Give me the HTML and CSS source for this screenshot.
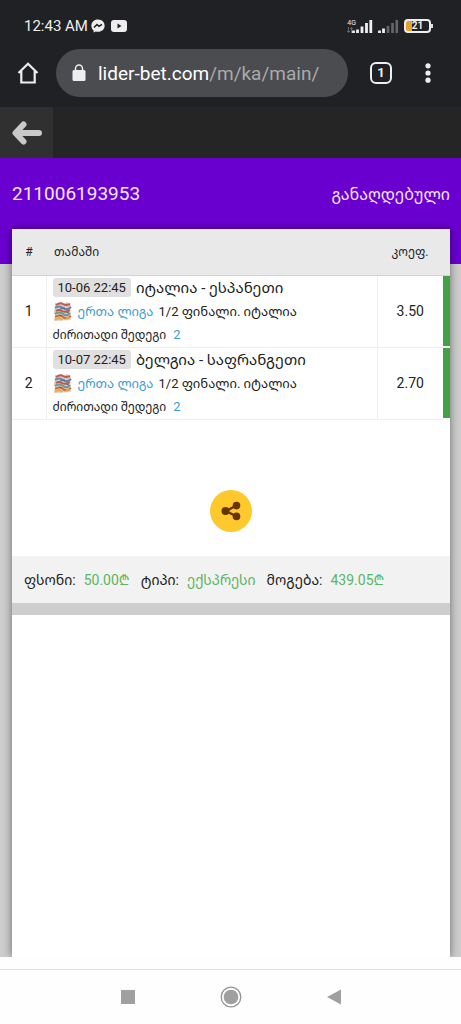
FILE: index.html
```html
<!DOCTYPE html>
<html lang="ka">
<head>
<meta charset="utf-8">
<meta name="viewport" content="width=device-width, initial-scale=1">
<title>lider-bet.com</title>
<link rel="stylesheet" href="styles.css">
</head>
<body>
<svg class="defs" aria-hidden="true">
  <symbol id="crest" viewBox="0 0 20 20">
    <path d="M2 2l3 1 3-2 3 2 3-2 3 2 1 3-1 3 1 4-1 3 1 3-17 1 1-5-1-4 1-4z" fill="#d9c9bd"/>
    <path d="M3 4q4-3 7-1t7 0" fill="none" stroke="#c65b4e" stroke-width="2"/>
    <path d="M2 7q4-3 8 0t8-1" fill="none" stroke="#5f87ad" stroke-width="2"/>
    <path d="M3 10q3-2 6 0t8-1" fill="none" stroke="#b9584f" stroke-width="2"/>
    <path d="M2 13q4-3 8 0t7-1" fill="none" stroke="#6b9a8f" stroke-width="2"/>
    <path d="M2 16q5-3 8 0t8-1" fill="none" stroke="#cf6a3c" stroke-width="2"/>
    <path d="M2 18l4-1 3 2M13 18l3-2" fill="none" stroke="#e0b13e" stroke-width="2"/>
    <path d="M7 8l5-1M6 14l3 1M13 11l3 1" stroke="#4d6b96" stroke-width="1"/>
  </symbol>
</svg>
<div class="screen">
  <header class="browser">
    <div class="status">
      <span class="clock">12:43 AM</span>
      <svg class="messenger" width="14" height="14" viewBox="0 0 14 14"><path d="M7 0.5C3 .5.4 3.200.4 6.700c0 2 .8 3.600 2.200 4.700v2.200l2.200-1.100c.7.2 1.400.3 2.200.3 4 0 6.600-2.700 6.600-6.100S11 .5 7 .5z" fill="#eee"/><path d="M3 8.500l3-3 2 1.800 3-2" fill="none" stroke="#202125" stroke-width="1.600"/></svg>
      <svg class="youtube" width="16" height="12" viewBox="0 0 16 12"><rect width="16" height="12" rx="3" fill="#eee"/><path d="M6.500 3.500v5l4-2.500z" fill="#202125"/></svg>
      <span class="network"><span>4G</span><svg width="6" height="6" viewBox="0 0 6 6"><path d="M1.500 0v5M0 4l1.500 1.500L3 4M4.500 6V1M3 2l1.500-1.500L6 2" fill="none" stroke="#777" stroke-width=".8"/></svg></span>
      <svg class="signal" width="21" height="13" viewBox="0 0 21 13"><path d="M1.500 13v-2.500M5.500 13V9.500M10 13V6.500M14.500 13V3M18.800 13V0" stroke="#eee" stroke-width="2.800"/></svg>
      <svg class="signal2" width="21" height="13" viewBox="0 0 21 13"><path d="M1.500 13v-2.500M5.500 13V8.500" stroke="#eee" stroke-width="2.800"/><path d="M10 13V6M14.500 13V3M18.800 13V0" stroke="#66676a" stroke-width="2.600"/></svg>
      <span class="battery"><span>21</span></span>
    </div>
    <div class="toolbar">
      <button class="plain" aria-label="Home"><svg width="22" height="22" viewBox="0 0 22 22"><path d="M1.500 11L11 1.800 20.500 11M4.300 9v11.500h13.400V9" fill="none" stroke="#eee" stroke-width="2.200"/></svg></button>
      <button class="address"><svg width="14" height="18" viewBox="0 0 14 18"><rect x=".5" y="6" width="13" height="11" rx="1.500" fill="#eee"/><path d="M3.500 6V4.500a3.500 3.500 0 0 1 7 0V6" fill="none" stroke="#eee" stroke-width="1.500"/></svg><span class="url">lider-bet.com<span class="path">/m/ka/main/</span></span></button>
      <button class="plain tabs"><span>1</span></button>
      <button class="plain menu" aria-label="Menu"><svg width="6" height="20" viewBox="0 0 6 20"><g fill="#eee"><circle cx="3" cy="2.800" r="2.600"/><circle cx="3" cy="10" r="2.600"/><circle cx="3" cy="17.200" r="2.600"/></g></svg></button>
    </div>
  </header>
  <nav class="backbar"><button class="back" aria-label="Back"><svg width="30" height="24" viewBox="0 0 30 24"><path d="M27 12H5M11.500 3.500L3.500 12l8 8.500" fill="none" stroke="#c9c9c9" stroke-width="6" stroke-linecap="round" stroke-linejoin="round"/></svg></button></nav>
  <main class="page">
    <div class="ticket"><h1>211006193953</h1><span class="state">განაღდებული</span></div>
    <section class="card">
      <table class="bets">
        <thead><tr><th class="num">#</th><th class="game">თამაში</th><th class="odd">კოეფ.</th><th class="mark"></th></tr></thead>
        <tbody>
          <tr>
            <td class="num">1</td>
            <td class="game">
              <div class="line match"><time>10-06 22:45</time><span>იტალია - ესპანეთი</span></div>
              <div class="line league"><svg width="20" height="20"><use href="#crest"/></svg><a href="#">ერთა ლიგა</a><span>1/2 ფინალი. იტალია</span></div>
              <div class="line result"><span>ძირითადი შედეგი</span><b>2</b></div>
            </td>
            <td class="odd">3.50</td><td class="mark"></td>
          </tr>
          <tr>
            <td class="num">2</td>
            <td class="game">
              <div class="line match"><time>10-07 22:45</time><span>ბელგია - საფრანგეთი</span></div>
              <div class="line league"><svg width="20" height="20"><use href="#crest"/></svg><a href="#">ერთა ლიგა</a><span>1/2 ფინალი. იტალია</span></div>
              <div class="line result"><span>ძირითადი შედეგი</span><b>2</b></div>
            </td>
            <td class="odd">2.70</td><td class="mark"></td>
          </tr>
        </tbody>
      </table>
      <div class="sharing"><button class="share" aria-label="Share"><svg width="20" height="20" viewBox="0 0 20 20"><path d="M15.500 4.500L5 10l10.500 5.500" fill="none" stroke="#653500" stroke-width="2.400"/><g fill="#653500"><circle cx="4.500" cy="10" r="4"/><circle cx="15.500" cy="4.600" r="3.800"/><circle cx="15.500" cy="15.400" r="3.800"/></g></svg></button></div>
      <dl class="summary">
        <div><dt>ფსონი:</dt><dd>50.00₾</dd></div>
        <div><dt>ტიპი:</dt><dd>ექსპრესი</dd></div>
        <div><dt>მოგება:</dt><dd>439.05₾</dd></div>
      </dl>
    </section>
  </main>
  <footer class="system">
    <button class="plain" aria-label="Recent apps"><svg width="22" height="22" viewBox="0 0 22 22"><rect x="4" y="4" width="14" height="14" fill="#a0a0a0"/></svg></button>
    <button class="plain" aria-label="Home screen"><svg width="22" height="22" viewBox="0 0 22 22"><circle cx="11" cy="11" r="9.800" fill="none" stroke="#949494" stroke-width="1.300"/><circle cx="11" cy="11" r="7.300" fill="#a0a0a0"/></svg></button>
    <button class="plain" aria-label="Go back"><svg width="22" height="22" viewBox="0 0 22 22"><path d="M4 11L18 3.500v15z" fill="#a0a0a0"/></svg></button>
  </footer>
</div>
</body>
</html>
```
FILE: styles.css
```css
* { box-sizing: border-box; }
body, h1, dl, dd { margin: 0; }
body {
  background: #fefefe;
  color: #222;
  font-family: Roboto, "Noto Sans Georgian", "DejaVu Sans", sans-serif;
  font-size: 14px;
}
svg { display: block; flex: none; }
button { font: inherit; color: inherit; border: 0; padding: 0; cursor: pointer; }
.plain { background: none; display: flex; }
.defs { position: absolute; width: 0; height: 0; }
.screen { display: flex; flex-direction: column; min-height: 100vh; }

.browser { background: #202125; color: #eee; padding: 16px 30px 10px 17px; }
.status { display: flex; align-items: center; height: 20px; padding-left: 7px; }
.clock { font-size: 15px; margin-right: 3px; }
.messenger { margin-right: 6px; }
.network { margin-left: auto; margin-right: -4px; font-size: 7px; line-height: 8px; display: flex; flex-direction: column; }
.signal { margin-right: 5px; }
.signal2 { margin-right: 5px; }
.battery {
  position: relative;
  width: 27px;
  height: 14px;
  border: 2px solid #eee;
  border-radius: 4px;
  background: linear-gradient(90deg, #e9a02c 6px, transparent 6px);
  font-size: 10px;
  font-weight: 700;
  line-height: 10px;
  text-align: center;
}
.battery::after {
  content: "";
  position: absolute;
  right: -4px;
  top: 3px;
  width: 2px;
  height: 4px;
  background: #ddd;
}
.toolbar { display: flex; align-items: center; margin-top: 13px; }
.address {
  flex: 1;
  height: 48px;
  margin: 0 22px 0 17px;
  padding: 0 16px;
  display: flex;
  align-items: center;
  gap: 12px;
  border-radius: 24px;
  background: #4b4c4f;
  font-size: 19px;
}
.url { color: #fff; }
.path { color: #a9aaac; }
.tabs span {
  width: 22px;
  height: 22px;
  border: 2px solid #eee;
  border-radius: 6px;
  font-size: 13px;
  font-weight: 700;
  line-height: 18px;
  text-align: center;
}
.menu { margin-left: 33px; }

.backbar { display: flex; background: #252525; }
.back { width: 53px; height: 51px; display: flex; align-items: center; justify-content: center; background: #303030; }

.page {
  flex: 1;
  display: flex;
  flex-direction: column;
  padding: 0 11px 0 12px;
  background: linear-gradient(#6a00cf 106px, #cdcdcd 106px);
  overflow: hidden;
}
.ticket { display: flex; align-items: center; justify-content: space-between; height: 71px; color: #f3e6fd; }
.ticket h1 { font-size: 19px; font-weight: 400; }
.state { font-size: 16px; }
.card { flex: 1; background: #fff; border-radius: 2px 2px 0 0; box-shadow: 0 0 8px rgba(0, 0, 0, .5); }

.bets { width: 100%; border-collapse: collapse; table-layout: fixed; }
.bets th { height: 46px; padding: 0; background: #e9e9e9; border-bottom: 1px solid #d4d4d4; font-size: 12px; font-weight: 400; }
.bets td { height: 72px; padding: 0; border-bottom: 1px solid #eee; }
.bets .num { width: 34px; text-align: center; }
.bets .game { text-align: left; }
.bets th.game { padding-left: 8px; }
.bets td.game { padding-left: 6px; border-left: 1px solid #eee; border-right: 1px solid #eee; }
.bets .odd { width: 66px; text-align: center; }
.bets .mark { width: 7px; }
.bets td.mark { background: #43a047; border-bottom: 2px solid #fff; }
.line { display: flex; align-items: center; height: 24px; font-size: 12px; white-space: nowrap; }
.match { gap: 5px; height: 23px; font-size: 15px; }
.match time { padding: 0 5px; font-size: 13px; line-height: 19px; border-radius: 3px; background: #e0e0e0; }
.league { gap: 5px; font-size: 13px; }
.league a { color: #429bd0; text-decoration: none; }
.result { gap: 7px; }
.result b { color: #429bd0; font-size: 13px; font-weight: 400; }

.sharing { display: flex; align-items: center; justify-content: center; height: 136px; padding-top: 46px; }
.share { width: 42px; height: 42px; border-radius: 50%; display: flex; align-items: center; justify-content: center; background: #ffc82c; }
.summary { display: flex; align-items: center; gap: 11px; height: 59px; padding: 0 12px; background: #f2f2f2; border-bottom: 12px solid #cecece; white-space: nowrap; }
.summary div { display: flex; align-items: baseline; gap: 8px; }
.summary dd { color: #5cb563; }

.system {
  display: flex;
  align-items: center;
  justify-content: center;
  gap: 81px;
  height: 55px;
  margin-top: 12px;
  border-top: 1px solid #e2e2e2;
}
```
